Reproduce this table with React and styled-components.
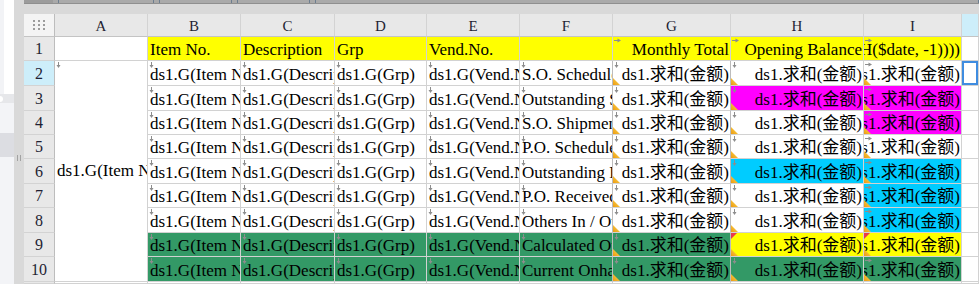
import React from 'react';
import styled, { createGlobalStyle } from 'styled-components';

const GlobalStyle = createGlobalStyle`
  html, body { margin: 0; padding: 0; background: #fff; overflow: hidden; }
  #root { width: 979px; height: 284px; }
`;

const YELLOW = '#ffff00';
const GREEN = '#339966';
const MAGENTA = '#ff00ff';
const CYAN = '#00ccff';
const SELBLUE = '#cdeefa';

const Page = styled.div`
  display: flex;
  width: 979px;
  height: 284px;
  overflow: hidden;
  font-family: "Liberation Serif", "Noto Sans CJK SC", serif;
`;

const SidePanel = styled.div`
  width: 14px;
  flex: none;
  display: flex;
  flex-direction: column;
  background: #f3f4f7;
`;
const SideTop = styled.div`
  height: 94px;
  background: #fff;
  border-left: 4px solid #f2f3f6;
  box-sizing: border-box;
`;
const SideBar = styled.div`
  height: 9px;
  background: #e6e7ea;
  display: flex;
  align-items: center;
`;
const SidePill = styled.span`
  width: 3px;
  height: 6px;
  background: #fff;
  border-radius: 0 3px 3px 0;
`;
const SideGap = styled.div`
  height: 30px;
`;
const SideItem = styled.div`
  height: 24px;
  background: #dcdde2;
`;

const Splitter = styled.div`
  width: 10px;
  flex: none;
  background: #d9d9d9;
  display: flex;
  justify-content: center;
  padding-top: 155px;
  box-sizing: border-box;
`;
const Grip = styled.span`
  width: 2px;
  height: 6px;
  border-left: 1px solid #a2a2a2;
  border-right: 1px solid #a2a2a2;
`;

const Main = styled.div`
  flex: 1;
  display: flex;
  flex-direction: column;
  background: #d9d9d9;
  min-width: 0;
`;

const TabStrip = styled.div`
  height: 4px;
  box-sizing: border-box;
  display: flex;
  gap: 5px;
  background: #a9a9a9;
  border-bottom: 1px solid #8f8f8f;
`;
const Tab = styled.div`
  width: ${p => (p.$w ? `${p.$w}px` : 'auto')};
  flex: ${p => (p.$grow ? 1 : 'none')};
  background: ${p => p.$dark ? '#9c9c9c' : '#aaaaaa'};
  border-left: ${p => p.$dark ? 'none' : '1px solid #6d7e90'};
  border-right: ${p => p.$dark ? 'none' : '1px solid #6d7e90'};
`;

const Band = styled.div`
  height: 10px;
  flex: none;
`;

const Sheet = styled.div`
  flex: 1;
  display: grid;
  grid-template-columns: 31px 93px 93px 94px 92px 93px 93px 118px 133px 98px 1fr;
  grid-template-rows: 23px 24px 25px 25px 24px 24px 25px 24px 25px 24px 25px 1fr;
  background: #fff;
`;

const Corner = styled.div`
  background: #f4f4f4;
  border-right: 1px solid #bdbdbd;
  border-bottom: 1px solid #c4c4c4;
  box-sizing: border-box;
  display: flex;
  align-items: center;
  justify-content: center;
`;

const ColHead = styled.div`
  background: ${p => (p.$sel ? SELBLUE : '#e8e8e8')};
  border-right: 1px solid #d3d3d3;
  border-bottom: 1px solid #c4c4c4;
  box-sizing: border-box;
  display: flex;
  align-items: center;
  justify-content: center;
  padding-top: 2px;
  font-size: 15px;
  color: #1f1f33;
`;

const RowHead = styled.div`
  background: ${p => (p.$sel ? SELBLUE : '#e8e8e8')};
  border-right: 1px solid #bdbdbd;
  border-bottom: 1px solid #d3d3d3;
  box-sizing: border-box;
  display: flex;
  align-items: center;
  justify-content: center;
  padding-top: 1px;
  font-size: 16px;
  color: #1f1f33;
`;

const Cell = styled.div`
  position: relative;
  box-sizing: border-box;
  border-right: 1px solid ${p => p.$vline || '#d2d2d2'};
  border-bottom: 1px solid #d2d2d2;
  background: ${p => p.$bg || '#fff'};
  display: flex;
  align-items: ${p => (p.$middle ? 'center' : 'flex-end')};
  justify-content: ${p => (p.$right ? 'flex-end' : 'flex-start')};
  padding: ${p => (p.$right ? '0 1px 0 0' : '0 0 0 2px')};
  overflow: hidden;
  white-space: nowrap;
  font-size: 17px;
  line-height: 20px;
  color: #000;
  grid-row: ${p => (p.$span ? `span ${p.$span}` : 'auto')};
  box-shadow: ${p => (p.$selected ? 'inset 0 0 0 2px #3f8ce0' : 'none')};
`;

const Text = styled.span`
  flex: none;
`;

const Mark = styled.span`
  position: absolute;
  left: 1px;
  top: 1px;
  line-height: 0;
`;

const FoldTri = styled.span`
  position: absolute;
  left: 0;
  bottom: 0;
  width: 7px;
  height: 7px;
  background: linear-gradient(45deg, #ec9a12 0%, #f6c23a 60%, #ffe27a 100%);
  clip-path: polygon(0 0, 0 100%, 100% 100%);
`;

const FlagTri = styled.span`
  position: absolute;
  left: 0;
  top: 0;
  width: 6px;
  height: 6px;
  background: #e8384f;
  clip-path: polygon(0 0, 100% 0, 0 100%);
`;

const DownArrow = () => (
  <Mark>
    <svg width="5" height="6" viewBox="0 0 5 6">
      <path d="M2.5 0v3.5" stroke="#8d8d8d" strokeWidth="1" />
      <path d="M0.5 3h4L2.5 6z" fill="#8d8d8d" />
    </svg>
  </Mark>
);

const RightArrow = () => (
  <Mark>
    <svg width="7" height="5" viewBox="0 0 7 5">
      <path d="M0 2.5h4" stroke="#8d8d8d" strokeWidth="1" />
      <path d="M3.5 0.5v4L7 2.5z" fill="#8d8d8d" />
    </svg>
  </Mark>
);

const DotsIcon = () => (
  <svg width="13" height="10" viewBox="0 0 13 10">
    {[0, 1, 2].map(r =>
      [0, 1, 2].map(c => (
        <rect key={`${r}${c}`} x={c * 5} y={r * 4} width="2" height="2" fill="#9c9c9c" />
      ))
    )}
  </svg>
);

const cols = ['A', 'B', 'C', 'D', 'E', 'F', 'G', 'H', 'I', ''];

const SUM = 'ds1.求和(金额)';

const dataRows = [
  { f: 'S.O. Scheduled Receipts' },
  { f: 'Outstanding S.O.', h: MAGENTA, i: MAGENTA },
  { f: 'S.O. Shipments', i: MAGENTA },
  { f: 'P.O. Scheduled Receipts' },
  { f: 'Outstanding P.O.', h: CYAN, i: CYAN },
  { f: 'P.O. Received', i: CYAN },
  { f: 'Others In / Out', i: CYAN },
  { f: 'Calculated Onhand', left: GREEN, h: YELLOW, i: YELLOW, flag: true },
  { f: 'Current Onhand', left: GREEN, h: GREEN, i: GREEN },
];

export default function App() {
  return (
    <>
      <GlobalStyle />
      <Page>
        <SidePanel>
          <SideTop />
          <SideBar>
            <SidePill />
          </SideBar>
          <SideGap />
          <SideItem />
        </SidePanel>
        <Splitter>
          <Grip />
        </Splitter>
        <Main>
          <TabStrip>
            <Tab $w={29} $dark />
            <Tab $w={94} />
            <Tab $w={71} />
            <Tab $w={71} />
            <Tab $grow />
          </TabStrip>
          <Band />
          <Sheet>
            <Corner>
              <DotsIcon />
            </Corner>
            {cols.map((c, i) => (
              <ColHead key={i} $sel={c === ''}>{c}</ColHead>
            ))}

            {/* Row 1 */}
            <RowHead>1</RowHead>
            <Cell />
            <Cell $bg={YELLOW}><Text>Item No.</Text></Cell>
            <Cell $bg={YELLOW}><Text>Description</Text></Cell>
            <Cell $bg={YELLOW}><Text>Grp</Text></Cell>
            <Cell $bg={YELLOW}><Text>Vend.No.</Text></Cell>
            <Cell $bg={YELLOW} />
            <Cell $bg={YELLOW} $right><RightArrow /><Text>Monthly Total</Text></Cell>
            <Cell $bg={YELLOW} $right><RightArrow /><Text>Opening Balance</Text></Cell>
            <Cell $bg={YELLOW} $right><RightArrow /><Text>=MONTH($date, -1))))</Text></Cell>
            <Cell />

            {dataRows.map((r, idx) => {
              const n = idx + 2;
              return (
                <React.Fragment key={n}>
                  <RowHead $sel={n === 2}>{n}</RowHead>
                  {n === 2 && (
                    <Cell $span={9} $middle>
                      <DownArrow />
                      <Text>ds1.G(Item No.)</Text>
                    </Cell>
                  )}
                  <Cell $bg={r.left}><DownArrow /><Text>ds1.G(Item No.)</Text></Cell>
                  <Cell $bg={r.left}><DownArrow /><Text>ds1.G(Description)</Text></Cell>
                  <Cell $bg={r.left}><DownArrow /><Text>ds1.G(Grp)</Text></Cell>
                  <Cell $bg={r.left}><DownArrow /><Text>ds1.G(Vend.No.)</Text></Cell>
                  <Cell $bg={r.left} $vline="#bcbcbc"><DownArrow /><Text>{r.f}</Text></Cell>
                  <Cell $bg={r.left} $right $vline="#bcbcbc"><DownArrow /><FoldTri /><Text>{SUM}</Text></Cell>
                  <Cell $bg={r.h} $right>
                    {r.flag ? <FlagTri /> : <DownArrow />}
                    <FoldTri />
                    <Text>{SUM}</Text>
                  </Cell>
                  <Cell $bg={r.i} $right>
                    {r.flag ? <FlagTri /> : <RightArrow />}
                    <FoldTri />
                    <Text>{SUM}</Text>
                  </Cell>
                  <Cell $selected={n === 2} />
                </React.Fragment>
              );
            })}

            <RowHead />
            {cols.map((c, i) => (
              <Cell key={`e${i}`} />
            ))}
          </Sheet>
        </Main>
      </Page>
    </>
  );
}
